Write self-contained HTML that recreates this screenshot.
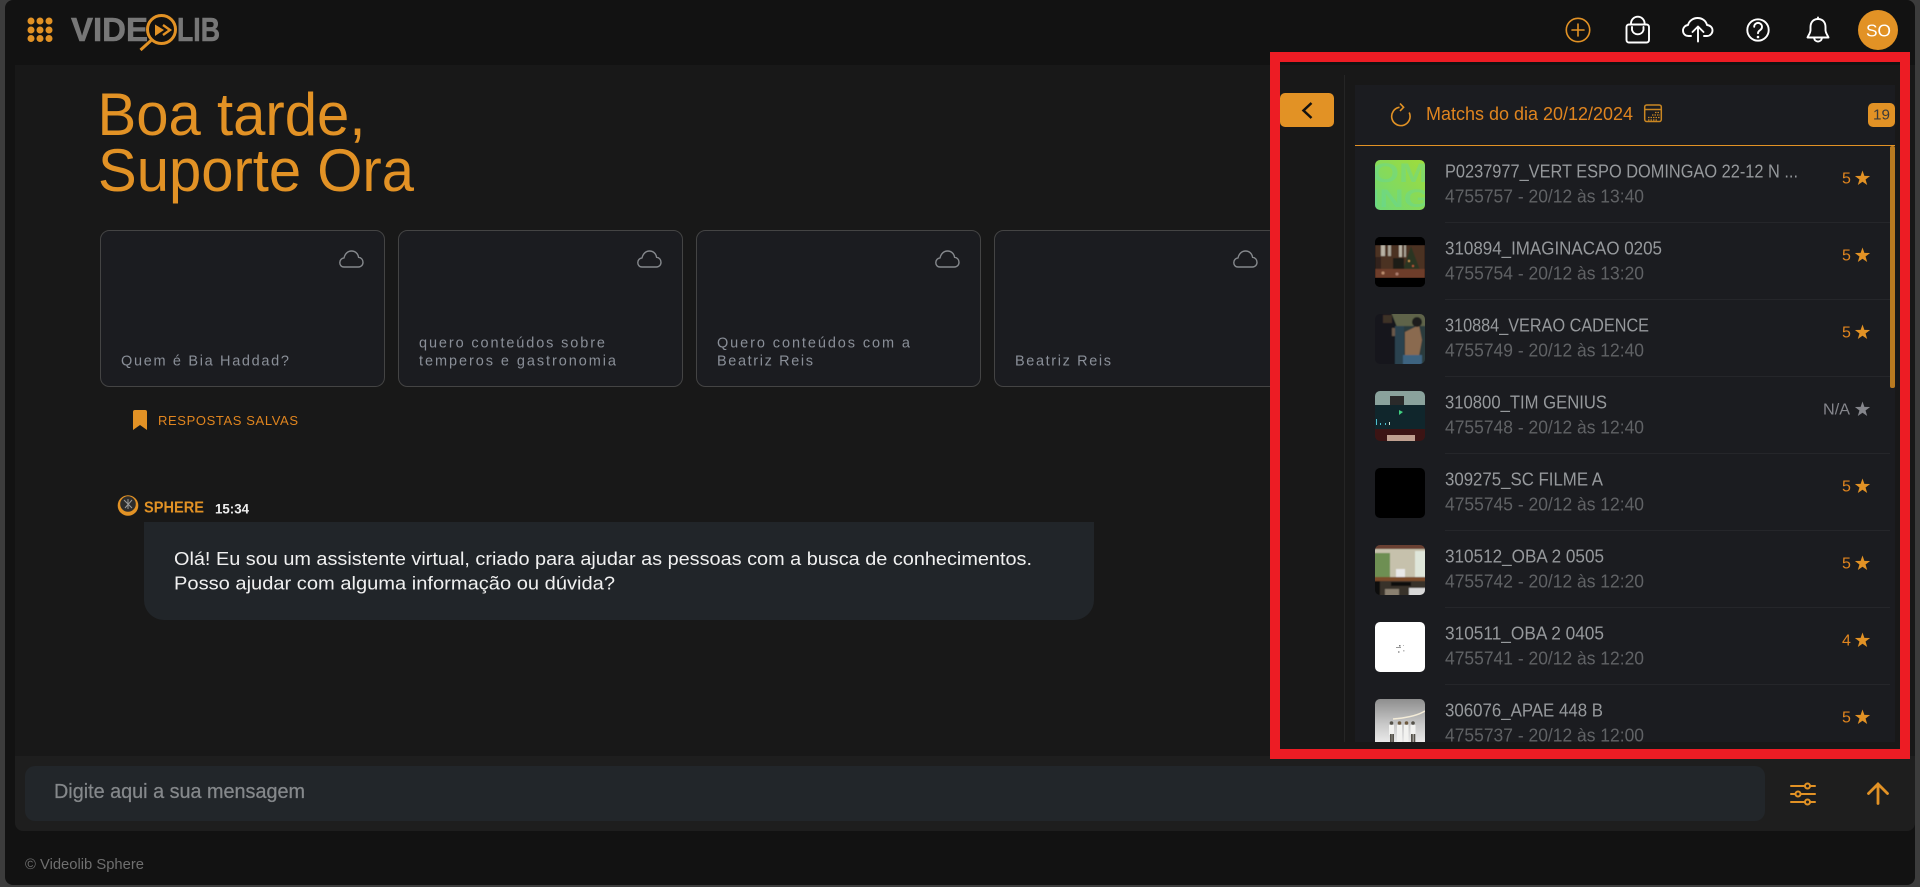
<!DOCTYPE html>
<html lang="pt-BR">
<head>
<meta charset="utf-8">
<title>Videolib Sphere</title>
<style>
html,body{margin:0;padding:0;width:1920px;height:887px;overflow:hidden;background:#3c3c3c}
svg{display:block}
text{font-family:"Liberation Sans",Arial,sans-serif}
</style>
</head>
<body>
<svg width="1920" height="887" viewBox="0 0 1920 887" xmlns="http://www.w3.org/2000/svg">
<defs>
<clipPath id="t"><rect width="50" height="50" rx="5"/></clipPath>
<filter id="soft"><feGaussianBlur stdDeviation=".5"/></filter>
<polygon id="star" points="0,-8 1.88,-2.59 7.6,-2.47 3.04,.99 4.7,6.47 0,3.2 -4.7,6.47 -3.04,.99 -7.6,-2.47 -1.88,-2.59"/>
<path id="cloud" d="M5 17 C2 17 .8 14.5 .8 12.6 C.8 10 2.7 8.2 5 7.9 C6 3.5 9 1 12.5 1 C16.4 1 19 3.7 19.6 7.3 C22 7.5 24 9.5 24 12.2 C24 15 22 17 19.5 17 Z" fill="none" stroke="#85888c" stroke-width="1.4"/>
<linearGradient id="g1" x1="1" y1="0" x2="0" y2="1"><stop offset="0" stop-color="#a0dc3a"/><stop offset="1" stop-color="#6ed878"/></linearGradient>
<linearGradient id="g8" x1="0" y1="0" x2="0" y2="1"><stop offset="0" stop-color="#8e8e8e"/><stop offset=".5" stop-color="#c8c8c8"/><stop offset="1" stop-color="#f6f6f6"/></linearGradient>
</defs>

<!-- frame -->
<rect x="5" y="0" width="1910" height="885" rx="8" fill="#121212"/>
<rect x="15" y="65" width="1900" height="691" fill="#181818"/>
<path d="M15 756H1915V823a8 8 0 0 1-8 8H23a8 8 0 0 1-8-8Z" fill="#1e1e1e"/>
<rect x="25" y="766" width="1740" height="55" rx="10" fill="#22262a"/>

<!-- logo -->
<g fill="#e29225">
<circle cx="31" cy="21" r="3.5"/><circle cx="40" cy="21" r="3.5"/><circle cx="49" cy="21" r="3.5"/>
<circle cx="31" cy="30" r="3.5"/><circle cx="40" cy="30" r="3.5"/><circle cx="49" cy="30" r="3.5"/>
<circle cx="31" cy="38.5" r="3.5"/><circle cx="40" cy="38.5" r="3.5"/><circle cx="49" cy="38.5" r="3.5"/>
</g>
<text x="71" y="41" font-size="33" font-weight="700" fill="#777" stroke="#777" stroke-width=".6" textLength="77" lengthAdjust="spacingAndGlyphs">VIDE</text>
<text x="177" y="41" font-size="33" font-weight="700" fill="#777" stroke="#777" stroke-width=".6" textLength="43" lengthAdjust="spacingAndGlyphs">LIB</text>
<circle cx="161.5" cy="29.5" r="14" fill="#121212" fill-opacity=".8" stroke="#e29225" stroke-width="3"/>
<path d="M151 40.5L140.5 50" stroke="#e29225" stroke-width="3" fill="none"/>
<polygon points="155,24.5 164,30 155,36" fill="#e29225"/>
<path d="M163 25L170 30L163 35" fill="none" stroke="#e29225" stroke-width="2.4"/>

<!-- top icons -->
<g fill="none" stroke-linecap="round" stroke-linejoin="round">
<g stroke="#e29225" stroke-width="1.6">
<circle cx="1578" cy="30" r="11.7"/><path d="M1578 24v12M1572 30h12"/>
</g>
<g stroke="#fff" stroke-width="1.9">
<path d="M1629 24.5h17.5a2.5 2.5 0 0 1 2.5 2.5V40a2.5 2.5 0 0 1-2.5 2.5H1629a2.5 2.5 0 0 1-2.5-2.5V27a2.5 2.5 0 0 1 2.5-2.5Z"/>
<path d="M1631 24.5v-1a6.8 6.8 0 0 1 13.6 0v1"/>
<path d="M1632 27v3a6 6 0 0 0 11.5 0v-3"/>
<path d="M1691 36h-2.5c-3.5 0-5.5-2.5-5.500-5.500 0-3 2.300-5.200 5-5.500 1-4 5-7 9.500-7 5 0 8.500 3 9.500 7 3.200.3 5.500 2.500 5.500 5.500s-2.500 5.500-5.500 5.500h-3"/>
<path d="M1698 41.500V27M1692.500 32l5.500-5.500 5.500 5.500"/>
<circle cx="1758" cy="30" r="10.700"/>
<path d="M1754.200 26.800a3.900 3.900 0 1 1 6 3.300c-1.400.9-2.200 1.600-2.200 3.100"/>
<path d="M1818 17.500v1.500M1818 19c-5 0-7.500 3.800-7.500 8v3c0 3-2 5-3 7.500h21c-1-2.500-3-4.500-3-7.500v-3c0-4.200-2.500-8-7.500-8Z"/>
<path d="M1814.200 38.500a3.900 3.900 0 0 0 7.600 0"/>
</g>
</g>
<circle cx="1758" cy="37" r="1.300" fill="#fff"/>
<circle cx="1878" cy="30" r="20" fill="#e29225"/>
<text x="1866" y="36.500" font-size="17.500" fill="#fff" textLength="25" lengthAdjust="spacingAndGlyphs">SO</text>

<!-- greeting -->
<text x="97.500" y="135" font-size="60" fill="#e29225" textLength="268" lengthAdjust="spacingAndGlyphs">Boa tarde,</text>
<text x="98" y="191" font-size="60" fill="#e29225" textLength="316" lengthAdjust="spacingAndGlyphs">Suporte Ora</text>

<!-- cards -->
<g fill="#1b1c20" stroke="#444">
<rect x="100.500" y="230.500" width="284" height="156" rx="9"/>
<rect x="398.500" y="230.500" width="284" height="156" rx="9"/>
<rect x="696.500" y="230.500" width="284" height="156" rx="9"/>
<rect x="994.500" y="230.500" width="284" height="156" rx="9"/>
</g>
<use href="#cloud" x="339" y="250"/>
<use href="#cloud" x="637" y="250"/>
<use href="#cloud" x="935" y="250"/>
<use href="#cloud" x="1233" y="250"/>
<g font-size="14.500" fill="#8a8f98">
<text x="121" y="365.500" textLength="168" lengthAdjust="spacing">Quem é Bia Haddad?</text>
<text x="419" y="347.500" textLength="186" lengthAdjust="spacing">quero conteúdos sobre</text>
<text x="419" y="365.500" textLength="197" lengthAdjust="spacing">temperos e gastronomia</text>
<text x="717" y="347.500" textLength="193" lengthAdjust="spacing">Quero conteúdos com a</text>
<text x="717" y="365.500" textLength="96" lengthAdjust="spacing">Beatriz Reis</text>
<text x="1015" y="365.500" textLength="96" lengthAdjust="spacing">Beatriz Reis</text>
</g>

<!-- saved -->
<path d="M133 412q0-2 2-2h10q2 0 2 2v18l-7-5-7 5Z" fill="#e29225"/>
<text x="158" y="425" font-size="13" fill="#e0851f" textLength="140" lengthAdjust="spacing">RESPOSTAS SALVAS</text>

<!-- message -->
<circle cx="128" cy="505.500" r="10.300" fill="#e29225"/>
<circle cx="128" cy="504" r="7.800" fill="#2c2c2c"/>
<path d="M124 500l8 8M132 500l-7 8M128 499v10" stroke="#999" stroke-width="1" fill="none"/>
<text x="144" y="512.500" font-size="16" font-weight="700" fill="#e29225" textLength="60" lengthAdjust="spacingAndGlyphs">SPHERE</text>
<text x="215" y="513.500" font-size="13.500" font-weight="700" fill="#eee" textLength="34" lengthAdjust="spacingAndGlyphs">15:34</text>
<path d="M144 522H1094V600a20 20 0 0 1-20 20H164a20 20 0 0 1-20-20Z" fill="#212529"/>
<text x="174" y="565" font-size="18.600" fill="#f0f0f0" textLength="858" lengthAdjust="spacingAndGlyphs">Olá! Eu sou um assistente virtual, criado para ajudar as pessoas com a busca de conhecimentos.</text>
<text x="174" y="589.500" font-size="18.600" fill="#f0f0f0" textLength="441" lengthAdjust="spacingAndGlyphs">Posso ajudar com alguma informação ou dúvida?</text>

<!-- input -->
<text x="54" y="798" font-size="20.500" fill="#85888b" stroke="#85888b" stroke-width=".25" textLength="251" lengthAdjust="spacingAndGlyphs">Digite aqui a sua mensagem</text>
<g fill="none" stroke="#e29225" stroke-width="2" stroke-linecap="round">
<path d="M1791 786h24M1791 794h24M1791 802h24"/>
<g fill="#1e1e1e"><circle cx="1807.500" cy="786" r="2.500"/><circle cx="1798" cy="794" r="2.500"/><circle cx="1807.500" cy="802" r="2.500"/></g>
<path d="M1878 803.500V784M1868.500 793.500l9.500-9.500 9.500 9.500" stroke-width="2.800"/>
</g>
<text x="25" y="869" font-size="14.500" fill="#6f6f6f" textLength="119" lengthAdjust="spacingAndGlyphs">© Videolib Sphere</text>

<!-- right panel -->
<rect x="1270" y="62" width="640" height="694" fill="#181818"/>
<rect x="1270" y="62" width="640" height="3" fill="#121212"/>
<rect x="1344" y="75" width="1" height="667" fill="#252525"/>
<rect x="1280" y="93" width="54" height="34" rx="5" fill="#e29225"/>
<path d="M1311.500 103L1303.500 110.500L1311.500 118" fill="none" stroke="#111" stroke-width="2.500"/>
<rect x="1355" y="85" width="540" height="657" fill="#1b1c20"/>
<rect x="1355" y="145" width="540" height="1" fill="#e29225"/>
<path d="M1399.500 107.300a9.200 9.200 0 1 0 9.700 5.200" fill="none" stroke="#e29225" stroke-width="1.600"/>
<path d="M1400 103.500l3.600 3.800-3.600 3.700" fill="none" stroke="#e29225" stroke-width="1.600"/>
<text x="1426" y="120" font-size="18" fill="#e0851f" textLength="207" lengthAdjust="spacingAndGlyphs">Matchs do dia 20/12/2024</text>
<g fill="none" stroke="#c98622" stroke-width="1.500">
<rect x="1644.700" y="105" width="16.600" height="16.500" rx="2"/>
<path d="M1645 109.500h16"/>
<path d="M1655 112.500h5M1652 115h8M1648 117.500h12M1648 120h9" stroke-dasharray="1.500 1" stroke-width="1.300"/>
</g>
<rect x="1868" y="103" width="27" height="24" rx="5" fill="#e29225"/>
<text x="1873" y="119.500" font-size="15" fill="#3a3a3a" textLength="17" lengthAdjust="spacingAndGlyphs">19</text>

<!-- dividers -->
<g fill="#25262a">
<rect x="1445" y="222" width="445" height="1"/>
<rect x="1445" y="299" width="445" height="1"/>
<rect x="1445" y="376" width="445" height="1"/>
<rect x="1445" y="453" width="445" height="1"/>
<rect x="1445" y="530" width="445" height="1"/>
<rect x="1445" y="607" width="445" height="1"/>
<rect x="1445" y="684" width="445" height="1"/>
</g>
<rect x="1890" y="146" width="5" height="242" rx="2" fill="#b87a20"/>

<!-- thumbs -->
<g transform="translate(1375,160)" clip-path="url(#t)">
<rect width="50" height="50" fill="url(#g1)"/>
<text x="-3" y="22" font-size="27" font-weight="700" fill="#62d8a0" fill-opacity=".4" textLength="56" lengthAdjust="spacingAndGlyphs">OM</text>
<text x="-5" y="47" font-size="25" font-weight="700" fill="#62d8a0" fill-opacity=".4" textLength="60" lengthAdjust="spacingAndGlyphs">ING</text>
</g>
<g transform="translate(1375,237)" clip-path="url(#t)">
<rect width="50" height="50" fill="#000"/>
<g filter="url(#soft)">
<rect y="8" width="50" height="33" fill="#4b3320"/>
<rect x="6" y="8" width="4" height="11" fill="#b9b2a4"/><rect x="13" y="8" width="3" height="11" fill="#a8a294"/><rect x="24" y="8" width="3" height="12" fill="#b9b2a4"/><rect x="29" y="8" width="2" height="12" fill="#a8a294"/>
<polygon points="36,9 45,33 28,33" fill="#2b3420"/>
<rect y="20" width="6" height="12" fill="#30231a"/>
<rect x="18" y="21" width="11" height="12" fill="#1f1c18"/>
<rect y="32" width="50" height="9" fill="#6e3d2a"/>
<circle cx="34" cy="24" r="1" fill="#e0a050"/><circle cx="38" cy="29" r="1" fill="#d06040"/><circle cx="8" cy="36" r="1.500" fill="#c09070"/><circle cx="22" cy="37" r="1.500" fill="#b08070"/>
</g>
<rect y="0" width="50" height="8" fill="#000"/><rect y="41" width="50" height="9" fill="#000"/>
</g>
<g transform="translate(1375,314)" clip-path="url(#t)"><g filter="url(#soft)">
<rect x="-2" y="-2" width="54" height="54" fill="#2b3a3c"/>
<rect x="-2" y="-2" width="54" height="14" fill="#5e6448"/>
<polygon points="-2,-2 16,-2 24,18 24,52 -2,52" fill="#14181c"/>
<rect x="8" y="1" width="9" height="8" fill="#3e3028"/>
<rect x="17" y="14" width="5" height="8" fill="#6a584a"/>
<rect x="20" y="12" width="9" height="40" fill="#2c4250"/>
<polygon points="30,18 44,11 47,26 44,42 30,42" fill="#8a6a50"/>
<circle cx="42" cy="8" r="5" fill="#1c1c1c"/>
<rect x="28" y="41" width="19" height="11" fill="#3e6480"/>
</g></g>
<g transform="translate(1375,391)" clip-path="url(#t)">
<rect width="50" height="50" fill="#10262c"/>
<rect width="50" height="14" fill="#8aa29c"/>
<rect x="15" y="5" width="14" height="9" fill="#2a2a2a"/>
<polygon points="24,19 28,21 24,24" fill="#40d080"/>
<rect x="1" y="28" width="1" height="6" fill="#50c0d0"/><rect x="5" y="32" width="1" height="2" fill="#50c0d0"/><rect x="10" y="32" width="1" height="2" fill="#50c0d0"/><rect x="14" y="31" width="1" height="3" fill="#d0e0d0"/>
<rect y="38" width="50" height="12" fill="#3c1414"/>
<rect x="12" y="44" width="28" height="6" fill="#c0a090"/>
</g>
<g transform="translate(1375,468)" clip-path="url(#t)"><rect width="50" height="50" fill="#000"/></g>
<g transform="translate(1375,545)" clip-path="url(#t)"><g filter="url(#soft)">
<rect x="-2" y="-2" width="54" height="54" fill="#c6c1ac"/>
<rect x="-2" y="8" width="17" height="24" fill="#6e8f52"/>
<rect x="40" y="6" width="12" height="26" fill="#dfe6da"/>
<rect x="-2" y="-2" width="54" height="6" fill="#6a4030"/>
<rect x="21" y="24" width="9" height="8" fill="#e8e8e8"/>
<rect x="-2" y="32" width="54" height="4" fill="#7c4c2a"/>
<rect x="-2" y="36" width="54" height="16" fill="#37302a"/>
<rect x="-2" y="36" width="7" height="16" fill="#111"/>
<rect x="16" y="37" width="20" height="4" fill="#111"/>
<rect x="34" y="43" width="18" height="9" fill="#d8d8d8"/>
<rect x="10" y="44" width="14" height="8" fill="#8a8070"/>
</g></g>
<g transform="translate(1375,622)" clip-path="url(#t)">
<rect width="50" height="50" fill="#fff"/>
<rect x="24" y="23" width="1.500" height="1.500" fill="#777"/><rect x="21" y="25" width="5" height="1" fill="#999"/><rect x="28" y="28" width="1.500" height="1.500" fill="#bbb"/><rect x="23" y="29" width="1.500" height="2" fill="#aaa"/><rect x="28" y="23" width="1" height="1" fill="#bbb"/>
</g>
<g transform="translate(1375,699)" clip-path="url(#t)">
<rect width="50" height="50" fill="url(#g8)"/>
<path d="M18 20C30 19 42 17 50 12" stroke="#f4ecd8" stroke-width="1.500" fill="none"/>
<g fill="#f2f2f0">
<rect x="14" y="26" width="5" height="10"/><rect x="22" y="26" width="5" height="17"/><rect x="29" y="26" width="4.500" height="17"/><rect x="35.500" y="26" width="5" height="10"/>
</g>
<g fill="#55524a">
<rect x="15" y="35" width="1.800" height="9"/><rect x="17.200" y="35" width="1.800" height="9"/>
<rect x="36" y="35" width="1.800" height="9"/><rect x="38.500" y="35" width="1.800" height="9"/>
<circle cx="16.500" cy="24" r="1.800"/><circle cx="38" cy="24" r="1.800"/>
</g>
<circle cx="24.500" cy="24" r="1.800" fill="#6e5a40"/><circle cx="31.500" cy="24" r="1.800" fill="#6e5a40"/>
</g>

<!-- list text -->
<g font-size="18" fill="#96999c">
<text x="1445" y="177.500" textLength="353" lengthAdjust="spacingAndGlyphs">P0237977_VERT ESPO DOMINGAO 22-12 N ...</text>
<text x="1445" y="254.500" textLength="217" lengthAdjust="spacingAndGlyphs">310894_IMAGINACAO 0205</text>
<text x="1445" y="331.500" textLength="204" lengthAdjust="spacingAndGlyphs">310884_VERAO CADENCE</text>
<text x="1445" y="408.500" textLength="162" lengthAdjust="spacingAndGlyphs">310800_TIM GENIUS</text>
<text x="1445" y="485.500" textLength="158" lengthAdjust="spacingAndGlyphs">309275_SC FILME A</text>
<text x="1445" y="562.500" textLength="159" lengthAdjust="spacingAndGlyphs">310512_OBA 2 0505</text>
<text x="1445" y="639.500" textLength="159" lengthAdjust="spacingAndGlyphs">310511_OBA 2 0405</text>
<text x="1445" y="716.500" textLength="158" lengthAdjust="spacingAndGlyphs">306076_APAE 448 B</text>
</g>
<g font-size="18" fill="#606265">
<text x="1445" y="202.500" textLength="199" lengthAdjust="spacingAndGlyphs">4755757 - 20/12 às 13:40</text>
<text x="1445" y="279.500" textLength="199" lengthAdjust="spacingAndGlyphs">4755754 - 20/12 às 13:20</text>
<text x="1445" y="356.500" textLength="199" lengthAdjust="spacingAndGlyphs">4755749 - 20/12 às 12:40</text>
<text x="1445" y="433.500" textLength="199" lengthAdjust="spacingAndGlyphs">4755748 - 20/12 às 12:40</text>
<text x="1445" y="510.500" textLength="199" lengthAdjust="spacingAndGlyphs">4755745 - 20/12 às 12:40</text>
<text x="1445" y="587.500" textLength="199" lengthAdjust="spacingAndGlyphs">4755742 - 20/12 às 12:20</text>
<text x="1445" y="664.500" textLength="199" lengthAdjust="spacingAndGlyphs">4755741 - 20/12 às 12:20</text>
<text x="1445" y="741.500" textLength="199" lengthAdjust="spacingAndGlyphs">4755737 - 20/12 às 12:00</text>
</g>

<!-- ratings -->
<g font-size="16" fill="#e0851f">
<text x="1842" y="183.500">5</text>
<text x="1842" y="260.500">5</text>
<text x="1842" y="337.500">5</text>
<text x="1842" y="491.500">5</text>
<text x="1842" y="568.500">5</text>
<text x="1842" y="645.500">4</text>
<text x="1842" y="722.500">5</text>
</g>
<text x="1823" y="414.500" font-size="16" fill="#85868c" textLength="27" lengthAdjust="spacingAndGlyphs">N/A</text>
<g fill="#e29225">
<use href="#star" x="1862.500" y="178.500"/>
<use href="#star" x="1862.500" y="255.500"/>
<use href="#star" x="1862.500" y="332.500"/>
<use href="#star" x="1862.500" y="486.500"/>
<use href="#star" x="1862.500" y="563.500"/>
<use href="#star" x="1862.500" y="640.500"/>
<use href="#star" x="1862.500" y="717.500"/>
</g>
<use href="#star" x="1862.500" y="409.500" fill="#85868c"/>

<!-- cover below list -->
<rect x="1280" y="742" width="620" height="8" fill="#181818"/>

<!-- red annotation rectangle -->
<rect x="1275" y="57" width="630" height="697" fill="none" stroke="#ed1c24" stroke-width="10"/>
</svg>
</body>
</html>
